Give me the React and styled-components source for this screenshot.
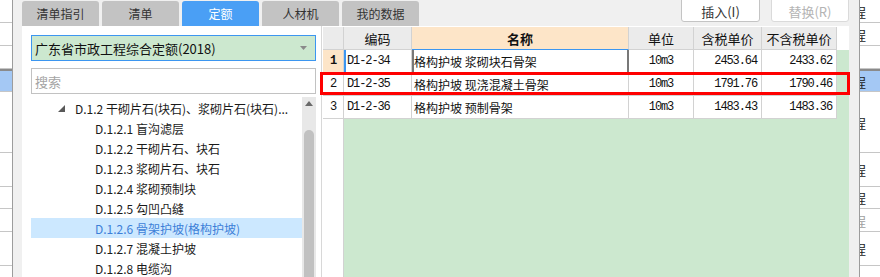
import React from "react";
import styled, { createGlobalStyle } from "styled-components";

const GlobalStyle = createGlobalStyle`
  html, body {
    margin: 0;
    padding: 0;
    background: #fff;
  }
  body {
    font-family: "Noto Sans CJK SC", "Noto Sans", sans-serif;
  }
`;

const cjk = `"Noto Sans CJK SC", "Noto Sans", sans-serif`;
const mono = `"Liberation Mono", "DejaVu Sans Mono", monospace`;
const lineColor = "#d2d2d2";
const eyeGreen = "#cce8cf";
const peach = "#fde5c8";
const accentBlue = "#3c96f0";

const data = {
    tabs: ["清单指引", "清单", "定额", "人材机", "我的数据"],
    activeTab: 2,
    library: "广东省市政工程综合定额(2018)",
    tree: [
        { level: 0, text: "D.1.2 干砌片石(块石)、浆砌片石(块石)..." },
        { level: 1, text: "D.1.2.1 盲沟滤层" },
        { level: 1, text: "D.1.2.2 干砌片石、块石" },
        { level: 1, text: "D.1.2.3 浆砌片石、块石" },
        { level: 1, text: "D.1.2.4 浆砌预制块" },
        { level: 1, text: "D.1.2.5 勾凹凸缝" },
        { level: 1, text: "D.1.2.6 骨架护坡(格构护坡)", selected: true },
        { level: 1, text: "D.1.2.7 混凝土护坡" },
        { level: 1, text: "D.1.2.8 电缆沟" },
    ],
    rows: [
        { code: "D1-2-34", name: "格构护坡 浆砌块石骨架", unit: "10m3", tax: "2453.64", noTax: "2433.62" },
        { code: "D1-2-35", name: "格构护坡 现浇混凝土骨架", unit: "10m3", tax: "1791.76", noTax: "1790.46" },
        { code: "D1-2-36", name: "格构护坡 预制骨架", unit: "10m3", tax: "1483.43", noTax: "1483.36" },
    ],
};

// rows of the window behind the dialog
const backRows = [
    { h: 23, text: true },
    { h: 23, text: true },
    { h: 23 },
    { h: 23, selected: true, text: true },
    { h: 61, text: true },
    { h: 34, text: true },
    { h: 22, text: true },
    { h: 23, text: true, faded: true },
    { h: 34, text: true },
    { h: 20 },
];

const Screen = styled.div`
    width: 880px;
    height: 277px;
    overflow: hidden;
    display: flex;
`;

const BackStrip = styled.div`
    width: ${(p) => p.$width}px;
    flex-shrink: 0;
    display: flex;
    flex-direction: column;
    overflow: hidden;
    background: #fff;
    border-${(p) => p.$side}: 1px solid #9c9c9c;
`;

const BackRow = styled.div`
    height: ${(p) => p.$h}px;
    flex-shrink: 0;
    box-sizing: border-box;
    border-bottom: 1px solid #c6c6c6;
    border-top: ${(p) => (p.$selected ? "2px solid #8a8a8a" : "none")};
    background: ${(p) => (p.$selected ? "#a4c8f4" : "#fff")};
    display: flex;
    align-items: center;
    white-space: nowrap;
    font-family: ${cjk};
    font-size: 13px;
    color: ${(p) => (p.$faded ? "#a0a0a0" : "#222")};
`;

const BackText = styled.span`
    margin-left: -7px;
`;

const Dialog = styled.div`
    flex: 1;
    min-width: 0;
    display: flex;
    flex-direction: column;
    background: #f0f0f0;
    padding: 0 10px 0 9px;
`;

const TopBar = styled.div`
    height: 26px;
    flex-shrink: 0;
    display: flex;
    align-items: flex-start;
`;

const Tabs = styled.div`
    display: flex;
    gap: 3px;
    margin-top: 1px;
`;

const Tab = styled.div`
    width: 77px;
    height: 25px;
    border-radius: 3px 3px 0 0;
    background: ${(p) => (p.$active ? "#4a9ff5" : "#c3c3c3")};
    color: ${(p) => (p.$active ? "#fff" : "#333")};
    font-family: ${cjk};
    font-size: 12px;
    display: flex;
    align-items: center;
    justify-content: center;
`;

const Actions = styled.div`
    margin-left: auto;
    display: flex;
    gap: 11px;
    margin-top: -4px;
`;

const ActionButton = styled.button`
    width: ${(p) => p.$width}px;
    height: 26px;
    padding: 0;
    border: 1px solid ${(p) => (p.disabled ? "#dadada" : "#c4c4c4")};
    border-radius: 3px;
    background: #fff;
    color: ${(p) => (p.disabled ? "#b4b4b4" : "#333")};
    font-family: ${cjk};
    font-size: 13px;
    padding-top: 4px;
`;

const Body = styled.div`
    flex: 1;
    min-height: 0;
    display: flex;
    background: #fff;
`;

const LeftPanel = styled.div`
    width: 299px;
    flex-shrink: 0;
    border-right: 1px solid #d8d8d8;
    display: flex;
    flex-direction: column;
    padding-top: 9px;
`;

const Field = styled.div`
    width: 285px;
    height: 26px;
    box-sizing: border-box;
    margin: ${(p) => (p.$gap ? "7px" : "0")} 0 0 9px;
    border: 1px solid ${(p) => (p.$select ? accentBlue : "#c2c2c2")};
    background: ${(p) => (p.$select ? eyeGreen : "#fff")};
    color: ${(p) => (p.$placeholder ? "#a4a4a4" : "#111")};
    font-family: ${cjk};
    font-size: 13px;
    display: flex;
    align-items: center;
    padding: 0 8px 0 3px;
    flex-shrink: 0;
`;

const FieldText = styled.span`
    flex: 1;
    white-space: nowrap;
`;

const TreeArea = styled.div`
    flex: 1;
    min-height: 0;
    display: flex;
    margin-top: 3px;
    overflow: hidden;
`;

const TreeList = styled.div`
    width: 271px;
    margin-left: 9px;
    padding-top: 1px;
    display: flex;
    flex-direction: column;
`;

const TreeRow = styled.div`
    height: 20px;
    flex-shrink: 0;
    display: flex;
    align-items: center;
    padding-left: ${(p) => (p.$level === 0 ? 27 : 64)}px;
    background: ${(p) => (p.$selected ? "#cce8ff" : "transparent")};
    color: ${(p) => (p.$selected ? "#3d7fd8" : "#1a1a1a")};
    font-family: ${cjk};
    font-size: 12px;
    white-space: nowrap;
    overflow: hidden;
`;

const Caret = styled.svg`
    width: 7px;
    height: 7px;
    margin-right: 10px;
    flex-shrink: 0;
`;

const Scrollbar = styled.div`
    width: 14px;
    background: #e8e8e8;
    display: flex;
    flex-direction: column;
    align-items: center;
`;

const ScrollArrow = styled.svg`
    width: 8px;
    height: 5px;
    margin-top: 4px;
`;

const ScrollThumb = styled.div`
    width: 10px;
    flex: 1;
    margin-top: 24px;
    border-radius: 5px 5px 0 0;
    background: #c1c1c1;
`;

const GridWrap = styled.div`
    position: relative;
    flex: 1;
    margin-left: 1px;
    padding-top: 1px;
    display: flex;
`;

const Table = styled.div`
    flex: 1;
    display: grid;
    grid-template-columns: 21px 68px 217px 65px 68px 75px 1fr;
    grid-template-rows: 23px 23px 23px 23px 1fr;
`;

const Cell = styled.div`
    box-sizing: border-box;
    border-right: 1px solid ${lineColor};
    border-bottom: 1px solid ${lineColor};
    display: flex;
    align-items: center;
    justify-content: ${(p) =>
        p.$align === "right" ? "flex-end" : p.$align === "center" ? "center" : "flex-start"};
    padding: 0 ${(p) => (p.$align === "right" ? 4 : 2)}px;
    background: ${(p) => p.$bg || "#fff"};
    font-family: ${(p) => (p.$mono ? mono : cjk)};
    font-size: ${(p) => (p.$mono ? 12 : p.$head ? 13 : 12)}px;
    font-weight: ${(p) => (p.$bold ? 700 : 400)};
    letter-spacing: ${(p) => (p.$mono ? "-1.1px" : "0")};
    color: #111;
    white-space: nowrap;
    overflow: hidden;
`;

const HeadCell = styled(Cell)`
    border-bottom-color: ${(p) => (p.$current ? accentBlue : lineColor)};
`;

const CodeCell = styled(Cell)`
    border-left: ${(p) => (p.$current ? `2px solid ${accentBlue}` : "none")};
    padding-left: ${(p) => (p.$current ? 1 : 3)}px;
`;

const NameCell = styled(Cell)`
    border-left: ${(p) => (p.$current ? "2px solid #787878" : "none")};
    border-right: ${(p) => (p.$current ? "2px solid #787878" : `1px solid ${lineColor}`)};
    padding-left: ${(p) => (p.$current ? 0 : 2)}px;
`;

const FillCell = styled.div`
    background: ${(p) => p.$bg};
    grid-column: ${(p) => p.$span || "auto"};
    border-right: ${(p) => (p.$edge ? `1px solid ${lineColor}` : "none")};
`;

const RedMark = styled.div`
    position: absolute;
    left: -3px;
    top: 46px;
    width: 530px;
    height: 23px;
    border: 3px solid #ff0000;
    box-sizing: border-box;
    pointer-events: none;
`;

function BackWindow({ side, showText }) {
    return (
        <BackStrip $side={side} $width={side === "right" ? 12 : 20}>
            {backRows.map((r, i) => (
                <BackRow key={i} $h={r.h} $selected={r.selected} $faded={r.faded}>
                    {showText && r.text && <BackText>程</BackText>}
                </BackRow>
            ))}
        </BackStrip>
    );
}

function DefinitionTree() {
    return (
        <TreeArea>
            <TreeList>
                {data.tree.map((node) => (
                    <TreeRow key={node.text} $level={node.level} $selected={node.selected}>
                        {node.level === 0 && (
                            <Caret viewBox="0 0 7 7">
                                <path d="M7 0 L7 7 L0 7 Z" fill="#595959" />
                            </Caret>
                        )}
                        {node.text}
                    </TreeRow>
                ))}
            </TreeList>
            <Scrollbar>
                <ScrollArrow viewBox="0 0 8 5">
                    <path d="M4 0 L8 5 L0 5 Z" fill="#6a6a6a" />
                </ScrollArrow>
                <ScrollThumb />
            </Scrollbar>
        </TreeArea>
    );
}

function QuotaGrid() {
    return (
        <GridWrap>
            <Table>
                <HeadCell $bg="#ebebeb" />
                <HeadCell $bg="#ebebeb" $align="center" $head>编码</HeadCell>
                <HeadCell $bg={peach} $align="center" $head $bold $current>名称</HeadCell>
                <HeadCell $bg="#ebebeb" $align="center" $head>单位</HeadCell>
                <HeadCell $bg="#ebebeb" $align="center" $head>含税单价</HeadCell>
                <HeadCell $bg="#ebebeb" $align="center" $head>不含税单价</HeadCell>
                <FillCell $bg="#fff" />

                {data.rows.map((row, i) => (
                    <React.Fragment key={row.code}>
                        <Cell $align="center" $mono $bold={i === 0} $bg={i === 0 ? peach : "#fff"}>
                            {i + 1}
                        </Cell>
                        <CodeCell $mono $current={i === 0}>{row.code}</CodeCell>
                        <NameCell $current={i === 0}>{row.name}</NameCell>
                        <Cell $align="center" $mono>{row.unit}</Cell>
                        <Cell $align="right" $mono>{row.tax}</Cell>
                        <Cell $align="right" $mono>{row.noTax}</Cell>
                        <FillCell $bg={eyeGreen} />
                    </React.Fragment>
                ))}

                <FillCell $bg="#fff" $edge />
                <FillCell $bg={eyeGreen} $span="2 / -1" />
            </Table>
            <RedMark />
        </GridWrap>
    );
}

function App() {
    return (
        <>
            <GlobalStyle />
            <Screen>
                <BackWindow side="right" />
                <Dialog>
                    <TopBar>
                        <Tabs>
                            {data.tabs.map((t, i) => (
                                <Tab key={t} $active={i === data.activeTab}>{t}</Tab>
                            ))}
                        </Tabs>
                        <Actions>
                            <ActionButton $width={79}>插入(I)</ActionButton>
                            <ActionButton $width={78} disabled>替换(R)</ActionButton>
                        </Actions>
                    </TopBar>
                    <Body>
                        <LeftPanel>
                            <Field $select>
                                <FieldText>{data.library}</FieldText>
                                <svg width="7" height="4" viewBox="0 0 7 4">
                                    <path d="M0 0 L7 0 L3.5 4 Z" fill="#8a8a8a" />
                                </svg>
                            </Field>
                            <Field $gap $placeholder>
                                <FieldText>搜索</FieldText>
                            </Field>
                            <DefinitionTree />
                        </LeftPanel>
                        <QuotaGrid />
                    </Body>
                </Dialog>
                <BackWindow side="left" showText />
            </Screen>
        </>
    );
}

export default App;
